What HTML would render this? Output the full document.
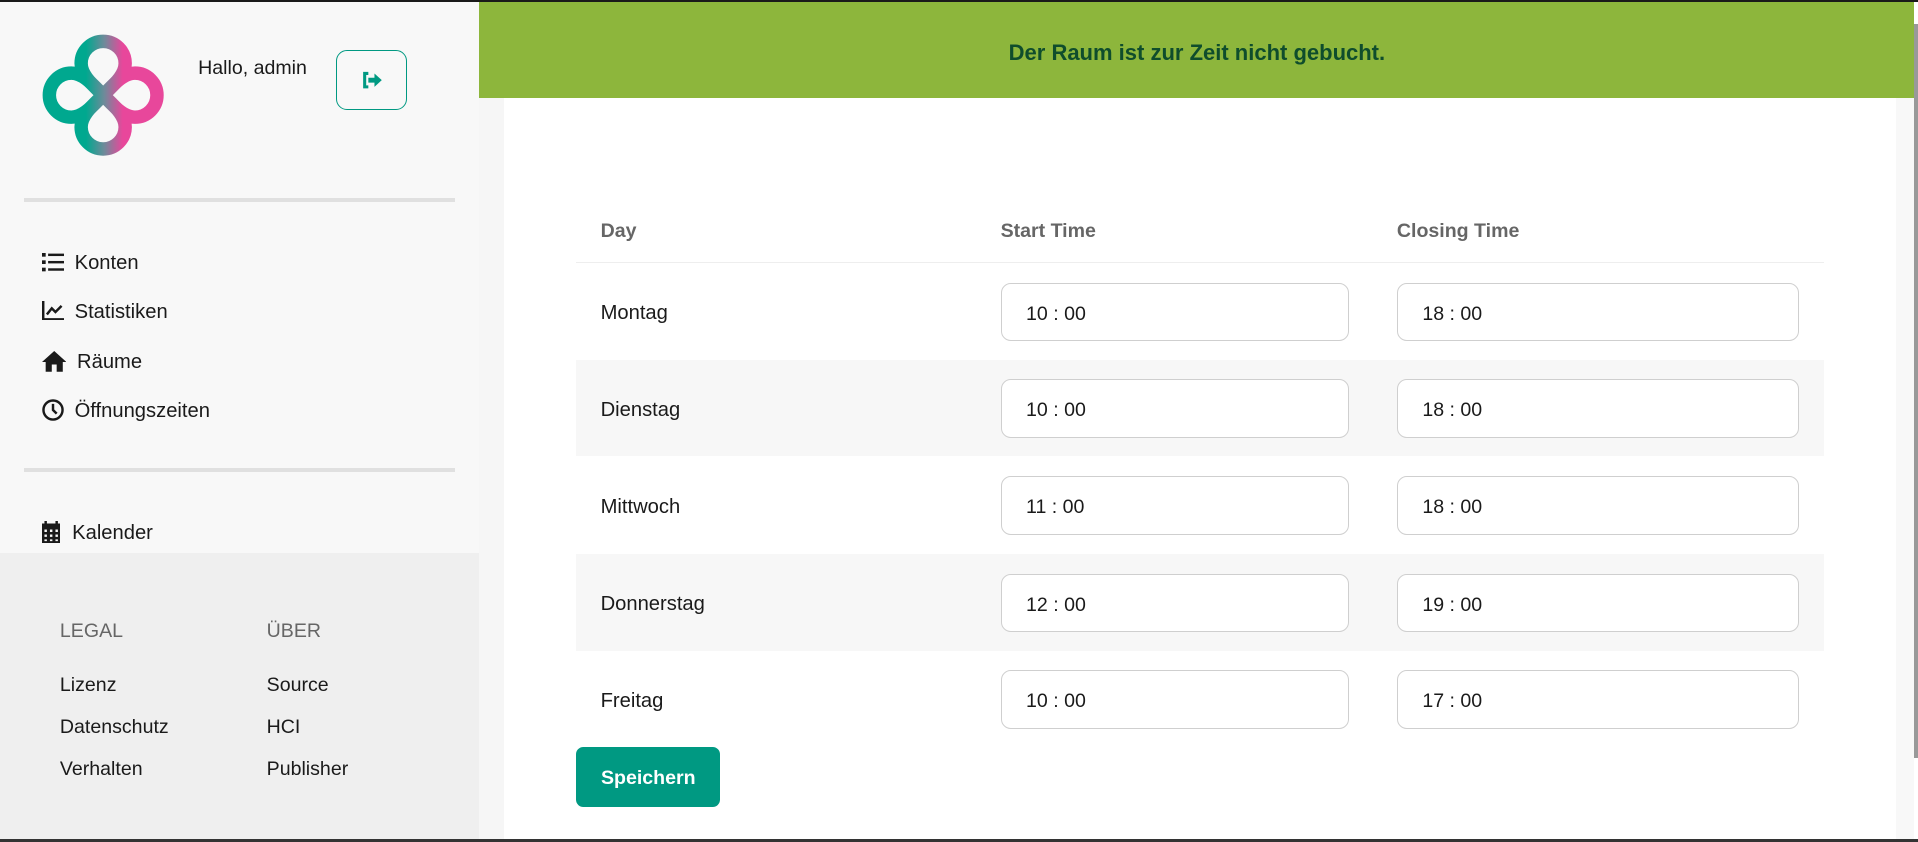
<!DOCTYPE html>
<html><head><meta charset="utf-8"><style>
html,body{margin:0;padding:0;overflow:hidden;background:#fff}
#w{zoom:1.22321;width:1568px;height:688px;position:relative;font-family:"Liberation Sans",sans-serif;color:#1a1a1a;overflow:hidden}
.a{position:absolute;white-space:nowrap}
.nav{font-size:16.5px}
.in{position:absolute;height:48px;border:1px solid #cfcfcf;border-radius:8px;background:#fff;box-sizing:border-box;font-size:16px;padding-left:20px;line-height:50px}
.row{position:absolute;left:471px;width:1020px;height:79px}
.day{position:absolute;left:20px;font-size:16.5px;line-height:82px}
</style></head><body><div id="w">
<div class="a" style="left:0;top:0;width:1568px;height:2px;background:#1a1a1a"></div>
<div class="a" style="left:0;top:686px;width:1568px;height:2px;background:#333"></div>
<!-- sidebar -->
<div class="a" style="left:0;top:2px;width:392px;height:450px;background:#f8f8f8"></div>
<div class="a" style="left:0;top:452px;width:392px;height:234px;background:#efefef"></div>
<svg class="a" style="left:34px;top:28px" width="100" height="100" viewBox="0 0 100 100">
<defs><linearGradient id="g" gradientUnits="userSpaceOnUse" x1="36" x2="66" y1="0" y2="0"><stop offset="0" stop-color="#00a88f"/><stop offset="0.5" stop-color="#6f8a9a"/><stop offset="1" stop-color="#e8479b"/></linearGradient></defs>
<g fill="none" stroke="url(#g)" stroke-width="11" stroke-linejoin="round">
<path d="M50,50 C42,42 32,34 32,24 A18,18 0 0 1 68,24 C68,34 58,42 50,50Z"/>
<path d="M50,50 C42,58 32,66 32,76 A18,18 0 0 0 68,76 C68,66 58,58 50,50Z"/>
<path d="M50,50 C42,42 34,32 24,32 A18,18 0 0 0 24,68 C34,68 42,58 50,50Z"/>
<path d="M50,50 C58,42 66,32 76,32 A18,18 0 0 1 76,68 C66,68 58,58 50,50Z"/>
</g></svg>
<div class="a" style="left:162px;top:47px;font-size:16px">Hallo, admin</div>
<div class="a" style="left:275px;top:41px;width:58px;height:49px;border:1px solid #009982;border-radius:9px;box-sizing:border-box"></div>
<svg class="a" style="left:295px;top:58px" width="18" height="15" viewBox="0 0 18 15"><path d="M6,2H3V13H6" fill="none" stroke="#009982" stroke-width="2.5"/><path d="M6,5.5H11V2L17,7.5L11,13V9.5H6Z" fill="#009982"/></svg>
<div class="a" style="left:20px;top:162px;width:352px;height:3px;background:#e0e0e0"></div>
<svg class="a" style="left:34px;top:207px" width="18" height="15" viewBox="0 0 18 15" fill="#1a1a1a"><rect x="0" y="0" width="3" height="3"/><rect x="0" y="6" width="3" height="3"/><rect x="0" y="12" width="3" height="3"/><rect x="5" y="0.5" width="13" height="2"/><rect x="5" y="6.5" width="13" height="2"/><rect x="5" y="12.5" width="13" height="2"/></svg>
<div class="a nav" style="left:61px;top:206px">Konten</div>
<svg class="a" style="left:34px;top:246px" width="18" height="16" viewBox="0 0 18 16"><path d="M1,0V15H18" fill="none" stroke="#1a1a1a" stroke-width="2"/><path d="M4,11L8,6L11,9L16,4" fill="none" stroke="#1a1a1a" stroke-width="2"/></svg>
<div class="a nav" style="left:61px;top:246px">Statistiken</div>
<svg class="a" style="left:34px;top:287px" width="20" height="17" viewBox="0 0 20 17" fill="#1a1a1a"><path d="M10,0L20,9H17V17H12V11H8V17H3V9H0Z"/></svg>
<div class="a nav" style="left:63px;top:287px">Räume</div>
<svg class="a" style="left:34px;top:326px" width="18" height="18" viewBox="0 0 18 18"><circle cx="9" cy="9" r="7.8" fill="none" stroke="#1a1a1a" stroke-width="2"/><path d="M9,4V9L12,12" fill="none" stroke="#1a1a1a" stroke-width="2"/></svg>
<div class="a nav" style="left:61px;top:327px">Öffnungszeiten</div>
<div class="a" style="left:20px;top:383px;width:352px;height:3px;background:#e0e0e0"></div>
<svg class="a" style="left:34px;top:426px" width="15" height="18" viewBox="0 0 15 18" fill="#1a1a1a"><rect x="2" y="0" width="2" height="3"/><rect x="11" y="0" width="2" height="3"/><path d="M0,2H15V18H0Z M2,7V9H4V7Z M6.5,7V9H8.5V7Z M11,7V9H13V7Z M2,11V13H4V11Z M6.5,11V13H8.5V11Z M11,11V13H13V11Z M2,15V16.5H4V15Z M6.5,15V16.5H8.5V15Z M11,15V16.5H13V15Z" fill-rule="evenodd"/></svg>
<div class="a nav" style="left:59px;top:427px">Kalender</div>
<div class="a" style="left:49px;top:507px;font-size:16px;color:#666">LEGAL</div>
<div class="a" style="left:218px;top:507px;font-size:16px;color:#666">ÜBER</div>
<div class="a" style="left:49px;top:551px;font-size:16px">Lizenz</div>
<div class="a" style="left:49px;top:585px;font-size:16px">Datenschutz</div>
<div class="a" style="left:49px;top:620px;font-size:16px">Verhalten</div>
<div class="a" style="left:218px;top:551px;font-size:16px">Source</div>
<div class="a" style="left:218px;top:585px;font-size:16px">HCI</div>
<div class="a" style="left:218px;top:620px;font-size:16px">Publisher</div>
<!-- main -->
<div class="a" style="left:392px;top:80px;width:20px;height:606px;background:#f6f6f6"></div>
<div class="a" style="left:1550px;top:80px;width:15px;height:606px;background:#f8f8f8"></div>
<div class="a" style="left:1565px;top:20px;width:3px;height:600px;background:#999"></div>
<div class="a" style="left:392px;top:2px;width:1173px;height:78px;background:#8db63c"></div>
<div class="a" style="left:392px;top:33px;width:1173px;text-align:center;font-size:18px;font-weight:bold;color:#0f4d2c">Der Raum ist zur Zeit nicht gebucht.</div>
<div class="a" style="left:491px;top:180px;font-size:16px;font-weight:bold;color:#666">Day</div>
<div class="a" style="left:818px;top:180px;font-size:16px;font-weight:bold;color:#666">Start Time</div>
<div class="a" style="left:1142px;top:180px;font-size:16px;font-weight:bold;color:#666">Closing Time</div>
<div class="a" style="left:471px;top:214px;width:1020px;height:1px;background:#eee"></div>
<div class="row" style="top:215px"><div class="day">Montag</div></div>
<div class="row" style="top:294px;background:#f7f7f7"><div class="day">Dienstag</div></div>
<div class="row" style="top:374px"><div class="day">Mittwoch</div></div>
<div class="row" style="top:453px;background:#f7f7f7"><div class="day">Donnerstag</div></div>
<div class="row" style="top:532px"><div class="day">Freitag</div></div>
<div class="in" style="left:818px;top:231px;width:285px">10 : 00</div>
<div class="in" style="left:1142px;top:231px;width:329px">18 : 00</div>
<div class="in" style="left:818px;top:310px;width:285px">10 : 00</div>
<div class="in" style="left:1142px;top:310px;width:329px">18 : 00</div>
<div class="in" style="left:818px;top:389px;width:285px">11 : 00</div>
<div class="in" style="left:1142px;top:389px;width:329px">18 : 00</div>
<div class="in" style="left:818px;top:469px;width:285px">12 : 00</div>
<div class="in" style="left:1142px;top:469px;width:329px">19 : 00</div>
<div class="in" style="left:818px;top:548px;width:285px">10 : 00</div>
<div class="in" style="left:1142px;top:548px;width:329px">17 : 00</div>
<div class="a" style="left:471px;top:611px;width:118px;height:49px;background:#009982;border-radius:6px;color:#fff;font-weight:bold;font-size:16px;text-align:center;line-height:52px">Speichern</div>
</div></body></html>
